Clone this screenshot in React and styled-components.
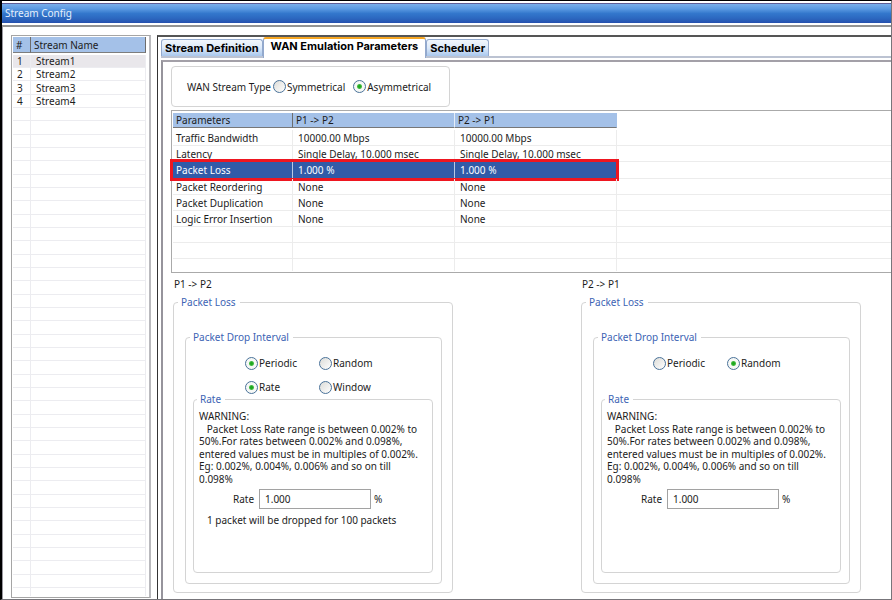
import React, { useState } from "react";
import styled, { createGlobalStyle } from "styled-components";

const GlobalStyle = createGlobalStyle`
  *,
  *::before,
  *::after {
    box-sizing: border-box;
  }

  body {
    margin: 0;
    background: #fff;
    color: #1c1c1c;
    font-family: "Noto Sans", Tahoma, sans-serif;
    font-size: 10px;
    line-height: 12px;
  }

  button,
  input {
    font: inherit;
    color: inherit;
  }
`;

const Window = styled.div`
  min-height: 100vh;
  display: flex;
  flex-direction: column;
  border: 1px solid #77757a;
  border-top: 1px solid #000;
  border-left: 2px solid #000;
`;

const TitleBar = styled.header`
  height: 20px;
  margin-top: 2px;
  padding-left: 3px;
  border-top: 1px solid #5d5d96;
  background: linear-gradient(#79aeea 0%, #5b9ae2 25%, #3377cc 50%, #2c68c0 75%, #2650ae 100%);

  h1 {
    margin: 0;
    color: #e6f0fc;
    font-size: 10px;
    font-weight: 400;
    line-height: 18px;
  }
`;

const Body = styled.div`
  flex: 1;
  display: flex;
  margin-top: 2px;
  padding-top: 8px;
  border-top: 2px solid #949494;
  border-left: 1px solid #9a98a0;
`;

const StreamList = styled.aside`
  width: 140px;
  flex: none;
  margin: 0 6px 1px 8px;
  padding: 1px 3px 0 1px;
  border: 1px solid #a5a5a5;
  border-right: 2px solid #b9b9bd;
`;

const StreamTable = styled.table`
  width: 100%;
  table-layout: fixed;
  border-collapse: separate;
  border-spacing: 0;

  th {
    height: 16px;
    padding: 0 0 0 3px;
    background: #a4c1e8;
    border-right: 1px solid #6d6d6d;
    border-bottom: 1px solid #7d7d7d;
    font-weight: 400;
    text-align: left;
  }

  th:first-child {
    width: 18px;
  }

  tbody::before {
    content: "";
    display: block;
    height: 2px;
  }

  td {
    height: 13px;
    padding: 0 0 0 4px;
    border-right: 1px solid #ececf0;
    border-bottom: 1px solid #ececf0;
    line-height: 12px;
  }

  td + td {
    padding-left: 5px;
  }

  tr:nth-child(3n) td {
    height: 14px;
  }

  tbody tr:last-child td {
    height: 8px;
    border-bottom: 0;
    line-height: 0;
  }
`;

const StreamRow = styled.tr`
  background: ${({ $active }) => ($active ? "#e9e7eb" : "#fff")};
  cursor: default;
`;

const Main = styled.main`
  flex: 1;
  min-width: 0;
  display: flex;
  flex-direction: column;
  padding-left: 3px;
  border-top: 2px solid #555;
  border-left: 1px solid #333;
`;

const Tabs = styled.nav`
  height: 21px;
  display: flex;
  align-items: flex-end;
  border-bottom: 2px solid #bcc3d2;
`;

const Tab = styled.button`
  height: ${({ $active }) => ($active ? "21px" : "17px")};
  margin-bottom: ${({ $active }) => ($active ? "-2px" : "0")};
  padding: ${({ $active }) => ($active ? "0 7px 5px" : "0 3px")};
  border: 1px solid #93a9cd;
  border-top: ${({ $active }) => ($active ? "2px solid #f5a623" : "1px solid #93a9cd")};
  border-bottom: 0;
  border-radius: 3px 3px 0 0;
  background: ${({ $active }) => ($active ? "#fff" : "linear-gradient(#f2f7fd, #dce9f9 50%, #a9c7ec)")};
  color: #000;
  font-family: Inter, Arial, sans-serif;
  font-size: 11px;
  font-weight: 700;
  white-space: nowrap;
`;

const Page = styled.section`
  flex: 1;
  margin-top: 2px;
  padding: 4px 0 6px 8px;
  border-top: 2px solid #a3a0a8;
  border-left: 2px solid #96949c;
`;

const TypeBox = styled.div`
  width: 279px;
  height: 41px;
  display: flex;
  align-items: center;
  padding-left: 15px;
  border: 1px solid #d4d4d4;
  border-radius: 4px;

  label {
    margin-left: 2px;
  }

  label + label {
    margin-left: 8px;
  }
`;

const RadioLabel = styled.label`
  display: flex;
  align-items: center;
  gap: 1px;
  white-space: nowrap;

  input {
    appearance: none;
    width: 13px;
    height: 13px;
    flex: none;
    margin: 0;
    border: 1px solid #4a7299;
    border-radius: 50%;
    background: linear-gradient(135deg, #dcdcd8, #fff);
  }

  input:checked {
    background: radial-gradient(circle, #1fa81f 0 1px, #45bb45 2px, #f6f8f6 3px);
  }
`;

const ParamBox = styled.div`
  height: 163px;
  margin-top: 3px;
  padding: 2px 0 0 1px;
  border: 1px solid #aaa;
  border-right: 0;
`;

const ParamTable = styled.table`
  width: 100%;
  table-layout: fixed;
  border-collapse: separate;
  border-spacing: 0;

  th {
    height: 15px;
    padding: 0 0 0 3px;
    background: #a4c1e8;
    border-right: 1px solid #6d6d6d;
    border-bottom: 1px solid #777;
    font-weight: 400;
    text-align: left;
  }

  th:first-child {
    width: 120px;
  }

  th:nth-child(2),
  th:nth-child(3) {
    width: 162px;
  }

  th:nth-child(2) {
    border-right-color: #e6eef9;
  }

  th:nth-child(3) {
    border-right-color: #a4c1e8;
  }

  th:last-child {
    width: auto;
    background: #fff;
    border-color: #fff;
  }

  tbody::before {
    content: "";
    display: block;
    height: 2px;
  }

  td {
    height: 16px;
    padding: 0 0 0 5px;
    border-right: 1px solid #ececec;
    border-bottom: 1px solid #ececec;
    white-space: nowrap;
  }

  td:first-child {
    padding-left: 3px;
  }

  td:last-child {
    border-right: 0;
  }

  tr:nth-child(3) td {
    height: 17px;
  }

  tbody tr:last-child td {
    height: 12px;
    border-bottom: 0;
  }
`;

const ParamRow = styled.tr`
  position: relative;

  ${({ $selected }) =>
    $selected &&
    `
    td {
      color: #fff;
    }

    td:not(:last-child) {
      background: #315ba8;
      border-right-color: #b9c9e4;
    }

    td:first-child::after {
      content: "";
      position: absolute;
      top: -3px;
      bottom: -2px;
      left: -3px;
      width: 449px;
      border: 3px solid #ee1620;
    }
  `}
`;

const Directions = styled.div`
  display: flex;
  justify-content: space-between;
  gap: 20px;
  margin-top: 5px;
  padding: 0 30px 0 2px;
`;

const Direction = styled.section`
  width: 280px;

  h2 {
    margin: 0;
    padding-left: 1px;
    font-size: 10px;
    font-weight: 400;
  }
`;

const Group = styled.fieldset`
  min-width: 0;
  margin: 0;
  border: 1px solid #d4d4d4;
  border-radius: 4px;

  > legend {
    margin: 0;
    padding: 0 4px 0 3px;
    color: #3d64b4;
  }
`;

const LossGroup = styled(Group)`
  margin-top: 6px;
  padding: 23px 10px 8px 11px;

  > legend {
    margin-left: -7px;
  }
`;

const IntervalGroup = styled(Group)`
  padding: 14px 8px 10px 7px;

  > legend {
    margin-left: -3px;
  }
`;

const RateGroup = styled(Group)`
  min-height: 180px;
  padding: 5px 4px 0 5px;

  > legend {
    margin-left: -2px;
  }
`;

const RadioGrid = styled.div`
  display: grid;
  grid-template-columns: 74px 74px;
  grid-template-rows: 12px 12px;
  row-gap: 12px;
  padding-left: 52px;
`;

const Warning = styled.p`
  margin: 0;

  span {
    display: block;
    white-space: pre;
    line-height: 12px;
  }

  span:nth-child(odd) {
    line-height: 13px;
  }
`;

const RateRow = styled.div`
  display: flex;
  align-items: center;
  margin-top: 4px;
  padding-left: 34px;

  label {
    width: 26px;
  }

  input {
    width: 112px;
    height: 20px;
    margin-right: 3px;
    padding: 0 5px;
    border: 1px solid #a2a2a2;
    background: #fff;
  }
`;

const Note = styled.p`
  margin: 5px 0 0;
  padding-left: 8px;
`;

const streams = ["Stream1", "Stream2", "Stream3", "Stream4"];

const tabs = ["Stream Definition", "WAN Emulation Parameters", "Scheduler"];

const params = [
  ["Traffic Bandwidth", "10000.00 Mbps", "10000.00 Mbps"],
  ["Latency", "Single Delay, 10.000 msec", "Single Delay, 10.000 msec"],
  ["Packet Loss", "1.000 %", "1.000 %"],
  ["Packet Reordering", "None", "None"],
  ["Packet Duplication", "None", "None"],
  ["Logic Error Insertion", "None", "None"],
  ["", "", ""],
  ["", "", ""],
  ["", "", ""],
];

const warning = [
  "WARNING:",
  "   Packet Loss Rate range is between 0.002% to",
  "50%.For rates between 0.002% and 0.098%,",
  "entered values must be in multiples of 0.002%.",
  "Eg: 0.002%, 0.004%, 0.006% and so on till",
  "0.098%",
];

const LIST_ROWS = 41;

const Radio = ({ name, value, current, onChange }) => (
  <RadioLabel>
    <input type="radio" name={name} value={value} checked={current === value} onChange={() => onChange(value)} />
    {value}
  </RadioLabel>
);

const PacketLoss = ({ id, title, defaultInterval }) => {
  const [dropInterval, setDropInterval] = useState(defaultInterval);
  const [mode, setMode] = useState("Rate");
  const [rate, setRate] = useState("1.000");
  const periodic = dropInterval === "Periodic";

  return (
    <Direction>
      <h2>{title}</h2>
      <LossGroup>
        <legend>Packet Loss</legend>
        <IntervalGroup>
          <legend>Packet Drop Interval</legend>
          <RadioGrid>
            <Radio name={`${id}-interval`} value="Periodic" current={dropInterval} onChange={setDropInterval} />
            <Radio name={`${id}-interval`} value="Random" current={dropInterval} onChange={setDropInterval} />
            {periodic && (
              <>
                <Radio name={`${id}-mode`} value="Rate" current={mode} onChange={setMode} />
                <Radio name={`${id}-mode`} value="Window" current={mode} onChange={setMode} />
              </>
            )}
          </RadioGrid>
          <RateGroup>
            <legend>Rate</legend>
            <Warning>
              {warning.map((line) => (
                <span key={line}>{line}</span>
              ))}
            </Warning>
            <RateRow>
              <label htmlFor={`${id}-rate`}>Rate</label>
              <input id={`${id}-rate`} type="text" value={rate} onChange={(e) => setRate(e.target.value)} />
              %
            </RateRow>
            {periodic && <Note>1 packet will be dropped for 100 packets</Note>}
          </RateGroup>
        </IntervalGroup>
      </LossGroup>
    </Direction>
  );
};

export default function App() {
  const [stream, setStream] = useState(0);
  const [tab, setTab] = useState(1);
  const [type, setType] = useState("Asymmetrical");
  const [param, setParam] = useState(2);

  return (
    <>
      <GlobalStyle />
      <Window>
        <TitleBar>
          <h1>Stream Config</h1>
        </TitleBar>
        <Body>
          <StreamList>
            <StreamTable>
              <thead>
                <tr>
                  <th>#</th>
                  <th>Stream Name</th>
                </tr>
              </thead>
              <tbody>
                {Array.from({ length: LIST_ROWS }, (_, i) => (
                  <StreamRow key={i} $active={i === stream} onClick={() => i < streams.length && setStream(i)}>
                    <td>{streams[i] && i + 1}</td>
                    <td>{streams[i]}</td>
                  </StreamRow>
                ))}
              </tbody>
            </StreamTable>
          </StreamList>

          <Main>
            <Tabs>
              {tabs.map((name, i) => (
                <Tab key={name} type="button" $active={i === tab} onClick={() => setTab(i)}>
                  {name}
                </Tab>
              ))}
            </Tabs>
            <Page>
              <TypeBox>
                WAN Stream Type
                <Radio name="type" value="Symmetrical" current={type} onChange={setType} />
                <Radio name="type" value="Asymmetrical" current={type} onChange={setType} />
              </TypeBox>

              <ParamBox>
                <ParamTable>
                  <thead>
                    <tr>
                      <th>Parameters</th>
                      <th>P1 -&gt; P2</th>
                      <th>P2 -&gt; P1</th>
                      <th></th>
                    </tr>
                  </thead>
                  <tbody>
                    {params.map(([name, first, second], i) => (
                      <ParamRow key={i} $selected={i === param} onClick={() => name && setParam(i)}>
                        <td>{name}</td>
                        <td>{first}</td>
                        <td>{second}</td>
                        <td></td>
                      </ParamRow>
                    ))}
                  </tbody>
                </ParamTable>
              </ParamBox>

              <Directions>
                <PacketLoss id="p1" title="P1 -> P2" defaultInterval="Periodic" />
                <PacketLoss id="p2" title="P2 -> P1" defaultInterval="Random" />
              </Directions>
            </Page>
          </Main>
        </Body>
      </Window>
    </>
  );
}
